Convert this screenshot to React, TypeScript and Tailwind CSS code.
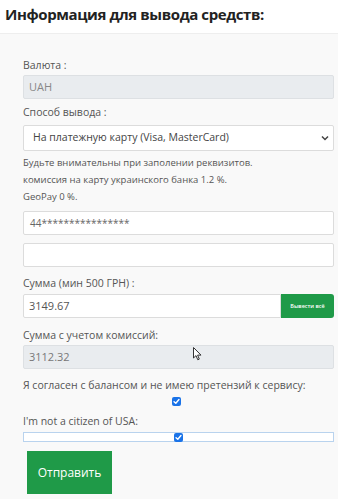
import React from "react";

function Check({ className = "" }: { className?: string }) {
  return (
    <span className={"inline-flex w-[9px] h-[9px] rounded-[2px] bg-[#1a73e8] items-center justify-center " + className}>
      <svg width="7" height="7" viewBox="0 0 8 8">
        <path d="M1.2 4.2 L3.2 6 L6.8 1.8" stroke="white" strokeWidth="1.6" fill="none" strokeLinecap="round" strokeLinejoin="round" />
      </svg>
    </span>
  );
}

export default function App() {
  const font = { fontFamily: '"Open Sans", "Noto Sans", sans-serif' };
  return (
    <div className="w-[338px] h-[499px] overflow-hidden bg-white relative" style={font}>
      <div className="h-[33px] px-[5px] pt-[2px]">
        <h1 className="text-[15px] font-bold text-[#222] leading-[24px] tracking-[-0.4px]">Информация для вывода средств:</h1>
      </div>
      <div className="border-t border-[#eeeeee] bg-[#f9f9f9] h-[466px] pl-[23px] pr-[4px] pt-[23px] flex flex-col text-[#555]">
        <div className="text-[10.5px] leading-[16px] h-[16px]">Валюта :</div>
        <div className="mt-[2px] h-[24px] bg-[#e9ecef] border border-[#dde0e3] rounded-[2px] px-[5px] flex items-center text-[11px] text-[#888]">UAH</div>

        <div className="mt-[5px] text-[10.5px] leading-[16px] h-[16px]">Способ вывода :</div>
        <div className="mt-[5px] h-[26px] bg-white border border-[#dcdcdc] rounded-[2px] pl-[9px] pr-[4px] flex items-center justify-between text-[10.5px] text-[#444]">
          <span>На платежную карту (Visa, MasterCard)</span>
          <svg width="8" height="6" viewBox="0 0 8 6"><path d="M1 1.5 L4 4.5 L7 1.5" stroke="#444" strokeWidth="1.5" fill="none" /></svg>
        </div>

        <div className="mt-[3px] text-[9.5px] leading-[17px] text-[#555]">
          <div>Будьте внимательны при заполении реквизитов.</div>
          <div>комиссия на карту украинского банка 1.2 %.</div>
          <div>GeoPay 0 %.</div>
        </div>

        <div className="mt-[6px] h-[24px] bg-white border border-[#dcdcdc] rounded-[2px] px-[6px] flex items-center text-[10px] text-[#666]">44****************</div>
        <div className="mt-[8px] h-[24px] bg-white border border-[#dcdcdc] rounded-[2px]"></div>

        <div className="mt-[8px] text-[10.5px] leading-[16px] h-[16px]">Сумма (мин 500 ГРН) :</div>
        <div className="mt-[3px] h-[24px] flex">
          <div className="flex-1 bg-white border border-[#dcdcdc] rounded-l-[2px] px-[5px] flex items-center text-[11px] text-[#555]">3149.67</div>
          <div className="w-[53px] bg-[#1f9a48] rounded-r-[3px] flex items-center justify-center text-white text-[5.5px] font-semibold">Вывести всё</div>
        </div>

        <div className="mt-[9px] text-[10.5px] leading-[16px] h-[16px]">Сумма с учетом комиссий:</div>
        <div className="mt-[2px] h-[24px] bg-[#e9ecef] border border-[#dde0e3] rounded-[2px] px-[5px] flex items-center text-[11px] text-[#777]">3112.32</div>

        <div className="mt-[8px] text-[10.5px] leading-[16px] h-[16px]">Я согласен с балансом и не имею претензий к сервису:</div>
        <div className="mt-[4px] h-[9px] flex justify-center pr-[4px]"><Check /></div>

        <div className="mt-[7px] text-[10.5px] leading-[16px] h-[16px]">I'm not a citizen of USA:</div>
        <div className="mt-[3px] h-[10px] border border-[#b9d3ee] bg-white flex items-center justify-center">
          <Check />
        </div>

        <button className="mt-[9px] ml-[4px] w-[85px] h-[43px] bg-[#1f9a48] text-white text-[12px] flex items-center justify-center">Отправить</button>
      </div>
      <svg className="absolute left-[193px] top-[347px]" width="9" height="14" viewBox="0 0 9 14">
        <path d="M0.5 0.5 L0.5 11 L3 8.6 L4.8 12.8 L6.3 12.1 L4.6 8.1 L8 8.1 Z" fill="white" stroke="#333" strokeWidth="1" strokeLinejoin="round" />
      </svg>
    </div>
  );
}
